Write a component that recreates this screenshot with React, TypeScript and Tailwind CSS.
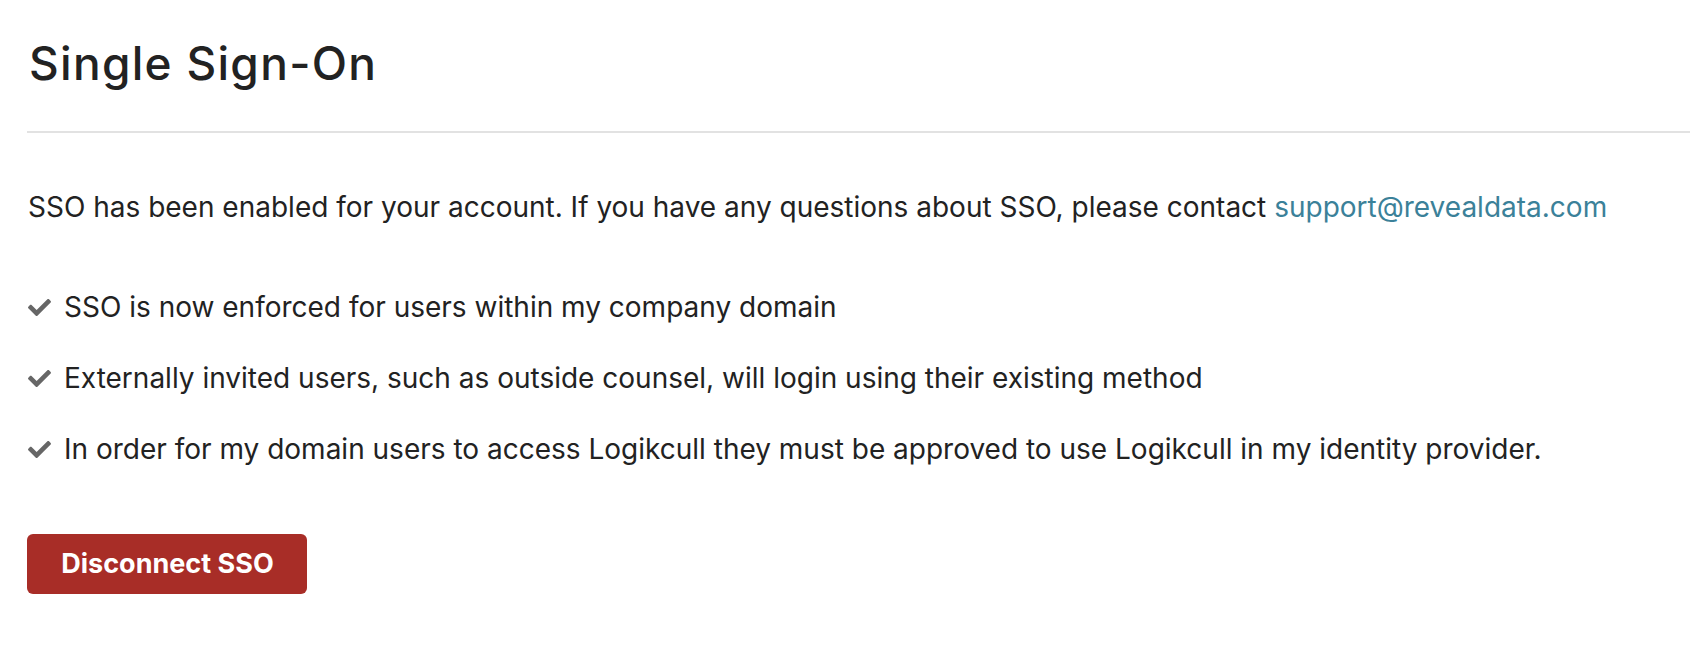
import React from "react";
import { FaCheck } from "react-icons/fa";

const items = [
  "SSO is now enforced for users within my company domain",
  "Externally invited users, such as outside counsel, will login using their existing method",
  "In order for my domain users to access Logikcull they must be approved to use Logikcull in my identity provider.",
];

export default function App() {
  return (
    <div
      className="min-h-[668px] w-full bg-white text-[#222222]"
      style={{ fontFamily: "Inter, 'Liberation Sans', sans-serif" }}
    >
      <div className="pl-[27px] pt-[37px]">
        <h1 className="text-[46px] leading-[52px] font-medium tracking-[1.3px] text-[#222222] pl-[2px]">
          Single Sign-On
        </h1>
        <div className="mt-[42px] h-[2px] bg-[#e2e2e2]" />
        <p className="mt-[54px] text-[28px] leading-[40px] pl-[1px]">
          SSO has been enabled for your account. If you have any questions about SSO, please contact{" "}
          <a href="#" className="text-[#3b8199]">
            support@revealdata.com
          </a>
        </p>
        <ul className="mt-[60px] flex flex-col gap-[31px]">
          {items.map((t) => (
            <li key={t} className="flex items-center text-[28px] leading-[40px]">
              <span className="w-[37px] flex-none flex items-center pl-[1px]">
                <FaCheck className="text-[#666666] w-[23px] h-[23px]" />
              </span>
              <span>{t}</span>
            </li>
          ))}
        </ul>
        <button className="mt-[65px] h-[60px] w-[280px] rounded-[6px] bg-[#a82d27] text-white text-[27px] font-bold pl-[1px] flex items-center justify-center">
          Disconnect SSO
        </button>
      </div>
    </div>
  );
}
